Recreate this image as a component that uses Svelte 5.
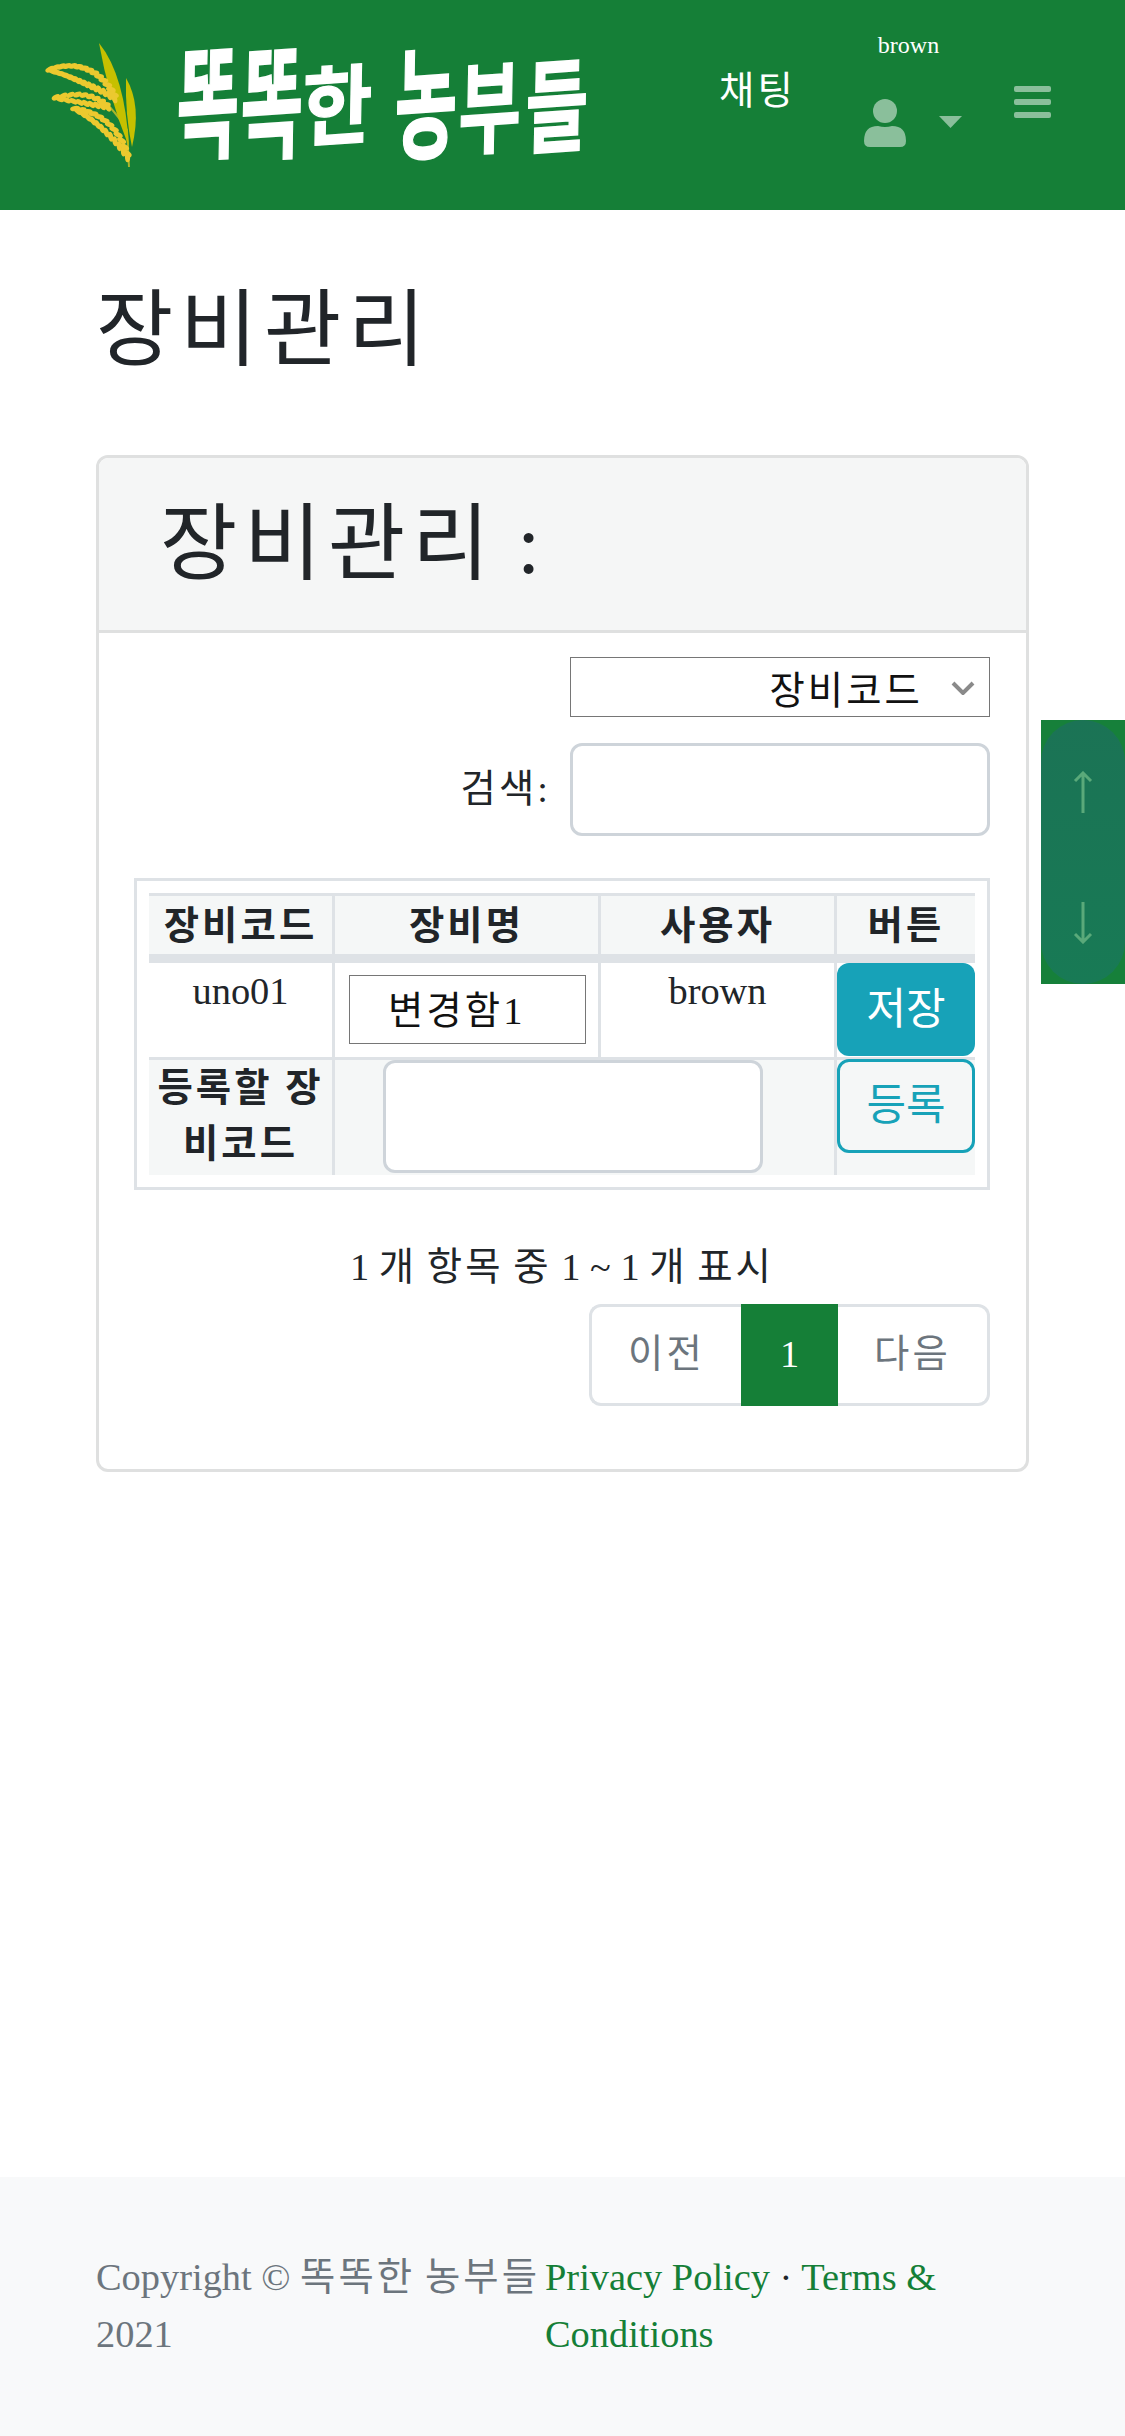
<script>
  const curve = (a, c, b, n) =>
    Array.from({ length: n }, (_, i) => {
      const t = i / (n - 1);
      const u = 1 - t;
      const x = u * u * a[0] + 2 * u * t * c[0] + t * t * b[0];
      const y = u * u * a[1] + 2 * u * t * c[1] + t * t * b[1];
      const dx = 2 * u * (c[0] - a[0]) + 2 * t * (b[0] - c[0]);
      const dy = 2 * u * (c[1] - a[1]) + 2 * t * (b[1] - c[1]);
      return { x, y, ang: (Math.atan2(dy, dx) * 180) / Math.PI };
    });

  const branch = (a, c, b, n, w, rx) => {
    const out = [];
    curve(a, c, b, n).forEach((p, i) => {
      const s = i % 2 ? 1 : -1;
      const grow = Math.sin((Math.PI * (i + 1)) / (n + 1)) * w;
      const r = (p.ang * Math.PI) / 180;
      out.push({
        x: p.x - Math.sin(r) * s * grow,
        y: p.y + Math.cos(r) * s * grow,
        ang: p.ang + s * 25,
        rx
      });
    });
    return out;
  };

  const grains = [
    ...branch([50, 70], [88, 68], [115, 98], 28, 7, 5),
    ...branch([56, 98], [88, 96], [108, 107], 18, 4, 4.6),
    ...branch([75, 109], [110, 120], [128, 157], 24, 4, 5)
  ];

  const logoChars = [
    { c: '똑', x: 176, y: 151, sx: 0.68, sy: 1.22 },
    { c: '똑', x: 240, y: 151, sx: 0.68, sy: 1.22 },
    { c: '한', x: 302, y: 140, sx: 0.76, sy: 0.86 },
    { c: '농', x: 394, y: 151, sx: 0.68, sy: 1.2 },
    { c: '부', x: 458, y: 147, sx: 0.68, sy: 1 },
    { c: '들', x: 525, y: 146, sx: 0.68, sy: 1 }
  ];

  const columns = ['장비코드', '장비명', '사용자', '버튼'];
</script>

<div class="page">
  <header class="topbar">
    <svg class="logo" width="600" height="210" viewBox="0 0 600 210" aria-label="똑똑한 농부들">
      <path d="M129 167 L127 130 Q120 118 108 105" fill="none" stroke="#a9b52a" stroke-width="2" />
      <path d="M99 43 Q125 75 129 147 Q108 95 99 43Z" fill="#c6c000" />
      <path d="M126 78 Q142 105 132 147 Q125 115 126 78Z" fill="#c6c000" />
      {#each grains as g}
        <ellipse cx={g.x} cy={g.y} rx={g.rx} ry="2.6" fill="#ecc92f" transform="rotate({g.ang} {g.x} {g.y})" />
      {/each}
      {#each logoChars as l}
        <text class="logo-char" transform="translate({l.x} {l.y}) rotate(-4) skewX(-5) scale({l.sx} {l.sy})">{l.c}</text>
      {/each}
    </svg>
    <a class="chat ko" href="#chat">채팅</a>
    <div class="user">
      <span class="user-name">brown</span>
      <div class="user-icons">
        <svg width="42" height="48" viewBox="0 0 42 48">
          <circle cx="21" cy="12" r="12" />
          <path d="M0 42 Q0 27 14 27 Q21 29 28 27 Q42 27 42 42 Q42 48 36 48 H6 Q0 48 0 42Z" />
        </svg>
        <svg class="caret" width="23" height="12" viewBox="0 0 23 12"><path d="M0 0H23L11.500 12Z" /></svg>
      </div>
    </div>
    <svg class="burger" width="37" height="32" viewBox="0 0 37 32">
      <rect width="37" height="6" rx="2" />
      <rect y="13" width="37" height="6" rx="2" />
      <rect y="26" width="37" height="6" rx="2" />
    </svg>
  </header>

  <main class="content">
    <h1 class="ko">장비관리</h1>
    <section class="card">
      <div class="card-head"><h2><span class="ko">장비관리</span> :</h2></div>
      <div class="card-body">
        <div class="select-row">
          <div class="select-wrap">
            <select class="ko"><option>장비코드</option></select>
            <svg class="chevron" width="26" height="14" viewBox="0 0 26 14"><path d="M3 2L13 12L23 2" /></svg>
          </div>
        </div>
        <div class="search-row">
          <label for="search"><span class="ko">검색</span>:</label>
          <input id="search" class="field" type="text" />
        </div>
        <div class="table-box">
          <table>
            <colgroup>
              <col class="c1" /><col class="c2" /><col class="c3" /><col class="c4" />
            </colgroup>
            <thead>
              <tr>
                {#each columns as c}<th class="ko">{c}</th>{/each}
              </tr>
            </thead>
            <tbody>
              <tr class="row-data">
                <td>uno01</td>
                <td><input class="name-input ko" type="text" value="변경함1" /></td>
                <td>brown</td>
                <td class="btn-cell"><button class="btn solid">저장</button></td>
              </tr>
              <tr class="row-add">
                <th class="ko">등록할 장비코드</th>
                <td class="add-cell"><input class="field add-input" type="text" /></td>
                <td class="merged"></td>
                <td class="btn-cell"><button class="btn outline">등록</button></td>
              </tr>
            </tbody>
          </table>
        </div>
        <p class="info">1 <span class="ko">개</span> <span class="ko">항목</span> <span class="ko">중</span> 1 ~ 1 <span class="ko">개</span> <span class="ko">표시</span></p>
        <nav class="pager">
          <a href="#prev" class="prev ko">이전</a>
          <a href="#one" class="on">1</a>
          <a href="#next" class="next ko">다음</a>
        </nav>
      </div>
    </section>
  </main>

  <footer class="foot">
    <div>Copyright © <span class="ko">똑똑한</span> <span class="ko">농부들</span> 2021</div>
    <div><a href="#privacy">Privacy Policy</a> · <a href="#terms">Terms &amp; Conditions</a></div>
  </footer>

  <div class="scroller">
    <div class="pill">
      <svg width="20" height="42" viewBox="0 0 20 42"><path d="M10 42V2M2 10L10 2L18 10" /></svg>
      <svg width="20" height="42" viewBox="0 0 20 42"><path d="M10 0V40M2 32L10 40L18 32" /></svg>
    </div>
  </div>
</div>

<style>
  :global(body) {
    margin: 0;
    background: #fff;
  }
  .page {
    position: relative;
    min-height: 2436px;
    display: flex;
    flex-direction: column;
    font: 38.4px/57.6px "Liberation Serif", "Noto Sans CJK JP", serif;
    color: #212529;
  }
  .ko {
    letter-spacing: 0.08em;
  }
  .topbar {
    height: 210px;
    background: #157f37;
    display: flex;
    align-items: flex-start;
    flex-shrink: 0;
  }
  .logo {
    flex-shrink: 0;
    display: block;
  }
  .logo-char {
    font-family: "Noto Sans CJK KR", sans-serif;
    font-weight: 700;
    font-size: 100px;
    fill: #fff;
    stroke: #fff;
    stroke-width: 1.5px;
  }
  .chat {
    margin: 63px 0 0 119px;
    width: 80px;
    color: #fff;
    text-decoration: none;
    white-space: nowrap;
  }
  .user {
    margin: 27px 0 0 65px;
    width: 98px;
    display: flex;
    flex-direction: column;
  }
  .user-name {
    font-size: 24px;
    line-height: 36px;
    color: #fff;
    text-align: center;
    margin-right: 9px;
  }
  .user-icons {
    margin-top: 36px;
    display: flex;
    align-items: center;
    gap: 33px;
  }
  .user-icons svg {
    fill: rgba(255, 255, 255, 0.5);
    display: block;
  }
  .caret {
    margin-top: -3px;
  }
  .burger {
    margin: 86px 0 0 52px;
    fill: rgba(255, 255, 255, 0.5);
  }
  .content {
    padding: 0 96px;
    flex: 1;
  }
  h1 {
    margin: 70px 0 74px;
    font-weight: 400;
    font-size: 84px;
    line-height: 101px;
  }
  .card {
    border: 3px solid #dfe0e0;
    border-radius: 12px;
    overflow: hidden;
  }
  .card-head {
    height: 172px;
    background: #f5f6f6;
    border-bottom: 3px solid #dfe0e0;
    padding-left: 61px;
    box-sizing: content-box;
  }
  h2 {
    margin: 0;
    padding-top: 36px;
    font-weight: 400;
    font-size: 84px;
    line-height: 101px;
  }
  .card-body {
    padding: 24px 36px 63px 35px;
  }
  .select-row {
    display: flex;
    justify-content: flex-end;
  }
  .select-wrap {
    position: relative;
    width: 420px;
    height: 60px;
  }
  select {
    appearance: none;
    width: 100%;
    height: 100%;
    box-sizing: border-box;
    background: #fff;
    border: 1px solid #767676;
    border-radius: 0;
    font: inherit;
    color: #111;
    text-align: right;
    text-align-last: right;
    padding: 5px 66px 0 0;
  }
  .chevron {
    position: absolute;
    right: 14px;
    top: 24px;
    fill: none;
    stroke: #8a8a8a;
    stroke-width: 4px;
  }
  .search-row {
    margin-top: 26px;
    display: flex;
    justify-content: flex-end;
    align-items: center;
    gap: 22px;
    color: #212529;
  }
  .field {
    box-sizing: border-box;
    border: 3px solid #ced4da;
    border-radius: 12px;
    background: #fff;
    outline: none;
  }
  .search-row .field {
    width: 420px;
    height: 93px;
  }
  .table-box {
    margin-top: 42px;
    border: 3px solid #dee2e6;
    padding: 12px 11px 12px 12px;
  }
  table {
    width: 826px;
    table-layout: fixed;
    border-collapse: separate;
    border-spacing: 0;
  }
  .c1 {
    width: 186px;
  }
  .c2 {
    width: 266px;
  }
  .c3 {
    width: 236px;
  }
  .c4 {
    width: 138px;
  }
  th,
  td {
    padding: 0;
    text-align: center;
    vertical-align: top;
    box-sizing: border-box;
    font-weight: 400;
  }
  th {
    font-weight: 700;
    background: #f5f7f7;
  }
  tr > :not(:last-child) {
    border-right: 3px solid #dee2e6;
  }
  thead th {
    border-top: 3px solid #dee2e6;
    border-bottom: 9px solid #dee2e6;
    height: 70px;
    line-height: 55px;
    padding-top: 3px;
  }
  .row-data td {
    height: 97px;
    border-bottom: 3px solid #dee2e6;
  }
  .row-add {
    background: #f5f7f7;
  }
  .row-add th,
  .row-add td {
    height: 115px;
    line-height: 56px;
  }
  .name-input {
    display: block;
    box-sizing: border-box;
    width: 237px;
    height: 69px;
    margin: 12px 0 0 14px;
    border: 1px solid #767676;
    padding: 0 0 6px 38px;
    font: inherit;
    color: #111;
    background: #fff;
    border-radius: 0;
  }
  .add-cell {
    position: relative;
    border-right: none !important;
  }
  .add-input {
    position: absolute;
    left: 48px;
    top: 0;
    width: 380px;
    height: 113px;
    z-index: 1;
  }
  .btn {
    display: block;
    width: 100%;
    box-sizing: border-box;
    font: inherit;
    font-size: 43px;
    border-radius: 12px;
    padding: 0;
    line-height: 1.3;
  }
  .solid {
    height: 93px;
    border: none;
    background: #17a2b8;
    color: #fff;
  }
  .outline {
    height: 94px;
    margin-top: -1px;
    background: transparent;
    border: 3px solid #17a2b8;
    color: #17a2b8;
  }
  .info {
    margin: 49px 0 7px;
    text-align: center;
  }
  .pager {
    width: 401px;
    margin-left: auto;
    height: 102px;
    display: flex;
    box-sizing: border-box;
  }
  .pager a {
    display: flex;
    align-items: center;
    justify-content: center;
    box-sizing: border-box;
    text-decoration: none;
    color: #6c757d;
    border: 3px solid #dee2e6;
    background: #fff;
  }
  .pager .prev {
    width: 152px;
    border-right: none;
    border-radius: 12px 0 0 12px;
  }
  .pager .on {
    width: 97px;
    background: #157f37;
    border-color: #157f37;
    color: #fff;
  }
  .pager .next {
    width: 152px;
    border-left: none;
    border-radius: 0 12px 12px 0;
  }
  .foot {
    flex-shrink: 0;
    background: #f8f9fa;
    color: #6c757d;
    padding: 72px 96px 72px;
    display: grid;
    grid-template-columns: 449px 449px;
  }
  .foot a {
    color: #157f37;
    text-decoration: none;
  }
  .foot div:last-child {
    color: #212529;
  }
  .scroller {
    position: absolute;
    left: 1041px;
    top: 720px;
    width: 84px;
    height: 264px;
    background: #16803a;
  }
  .pill {
    height: 100%;
    border-radius: 42px;
    background: linear-gradient(#1b7355, #187a55);
    display: flex;
    flex-direction: column;
    align-items: center;
    justify-content: space-between;
    padding: 51px 0 40px;
    box-sizing: border-box;
  }
  .pill svg {
    fill: none;
    stroke: #5aa97a;
    stroke-width: 3px;
    display: block;
  }
</style>
